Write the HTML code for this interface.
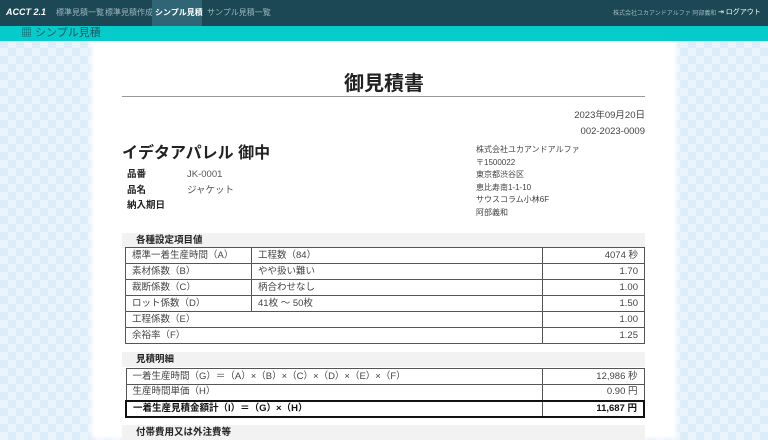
<!DOCTYPE html>
<html><head><meta charset="utf-8"><style>
*{margin:0;padding:0;box-sizing:border-box}
body{width:768px;height:436px;overflow:hidden;font-family:"Liberation Sans","Noto Sans CJK JP",sans-serif;color:#222;
background-color:#eaf4fc;background-image:linear-gradient(45deg,#dcecf9 25%,transparent 25%,transparent 75%,#dcecf9 75%),linear-gradient(45deg,#dcecf9 25%,transparent 25%,transparent 75%,#dcecf9 75%);background-size:16px 16px;background-position:0 0,8px 8px;position:relative}
.nav{position:absolute;left:0;top:0;width:768px;height:26px;background:#1c4755;color:#9fb8c0;font-size:8px;z-index:2}
.nav span{position:absolute;top:8px;line-height:10px}
.bar{position:absolute;left:0;top:26px;width:768px;height:15px;background:#06cbcb;color:#1d5560;font-size:11px;z-index:2}
.paper{position:absolute;left:94px;top:41px;width:580px;height:395px;background:#fff;box-shadow:0 0 6px 3px #fff}
.a{position:absolute;white-space:nowrap;line-height:1.2}
table{position:absolute;border-collapse:collapse;font-size:9.5px;color:#444}
td{border:1px solid #555;height:16px;padding:0 6px;line-height:14px}
.r{text-align:right}
.h{position:absolute;left:28px;width:523px;height:15px;background:#f2f2f2;font-size:9.5px;font-weight:bold;padding:0 0 0 14px;line-height:15px}
</style></head><body>
<div class="nav">
<span style="left:6px;top:7px;color:#fff;font-weight:bold;font-style:italic;font-size:9px">ACCT 2.1</span>
<span style="left:56px">標準見積一覧</span><span style="left:105px">標準見積作成</span>
<div style="position:absolute;left:152px;top:0;width:50px;height:26px;background:#2f6575"></div>
<span style="left:155px;color:#fff;font-weight:bold">シンプル見積</span>
<span style="left:207px">サンプル見積一覧</span>
<span style="left:613px;font-size:6px;top:10px;line-height:8px">株式会社ユカアンドアルファ 阿部義和</span>
<span style="left:718px;color:#fff;font-size:7px">⇥ ログアウト</span>
</div>
<div class="bar"><span class="a" style="left:21px;top:0;line-height:15px">▦ シンプル見積</span></div>
<div class="paper">
<div class="a" style="left:0;width:580px;text-align:center;top:32px;font-size:20px;font-weight:bold;line-height:22px">御見積書</div>
<div class="a" style="left:28px;top:55px;width:523px;height:1px;background:#999"></div>
<div class="a" style="right:29px;top:69px;font-size:9.5px;color:#444">2023年09月20日</div>
<div class="a" style="right:29px;top:85px;font-size:9.5px;color:#444">002-2023-0009</div>
<div class="a" style="left:28px;top:103px;font-size:16px;font-weight:bold">イデタアパレル 御中</div>
<div class="a" style="left:33px;top:126px;font-size:9.5px;font-weight:bold;line-height:15.5px">品番<br>品名<br>納入期日</div>
<div class="a" style="left:93px;top:126px;font-size:9.5px;color:#555;line-height:15.5px">JK-0001<br>ジャケット</div>
<div class="a" style="left:382px;top:103px;font-size:8px;color:#444;line-height:12.6px">株式会社ユカアンドアルファ<br>〒1500022<br>東京都渋谷区<br>恵比寿南1-1-10<br>サウスコラム小林6F<br>阿部義和</div>
<div class="h" style="top:192px">各種設定項目値</div>
<table style="left:31px;top:206px;width:520px">
<tr><td style="width:126px">標準一着生産時間（A）</td><td>工程数（84）</td><td class="r" style="width:102px">4074 秒</td></tr>
<tr><td>素材係数（B）</td><td>やや扱い難い</td><td class="r">1.70</td></tr>
<tr><td>裁断係数（C）</td><td>柄合わせなし</td><td class="r">1.00</td></tr>
<tr><td>ロット係数（D）</td><td>41枚 ～ 50枚</td><td class="r">1.50</td></tr>
<tr><td colspan="2">工程係数（E）</td><td class="r">1.00</td></tr>
<tr><td colspan="2">余裕率（F）</td><td class="r">1.25</td></tr>
</table>
<div class="h" style="top:311px">見積明細</div>
<table style="left:31px;top:327px;width:520px">
<tr><td>一着生産時間（G）＝（A）×（B）×（C）×（D）×（E）×（F）</td><td class="r" style="width:102px">12,986 秒</td></tr>
<tr><td>生産時間単価（H）</td><td class="r">0.90 円</td></tr>
<tr style="font-weight:bold;color:#111"><td style="border:2px solid #111;border-right:1px solid #555">一着生産見積金額計（I）＝（G）×（H）</td><td class="r" style="border:2px solid #111;border-left:none">11,687 円</td></tr>
</table>
<div class="h" style="top:384px">付帯費用又は外注費等</div>
</div>
</body></html>
